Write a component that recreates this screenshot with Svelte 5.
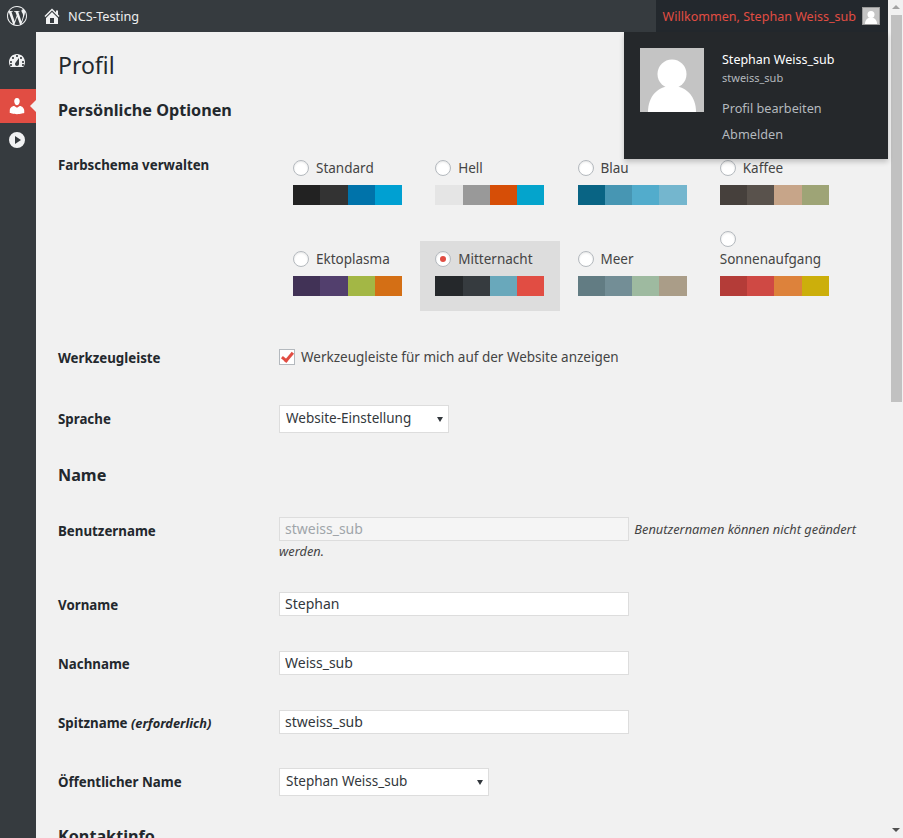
<script>
    const schemes = [
        {name: "Standard", colors: ["#222", "#333", "#0073aa", "#00a0d2"]},
        {name: "Hell", colors: ["#e5e5e5", "#999", "#d64e07", "#04a4cc"]},
        {name: "Blau", colors: ["#096484", "#4796b3", "#52accc", "#74b6ce"]},
        {name: "Kaffee", colors: ["#46403c", "#59524c", "#c7a589", "#9ea476"]},
        {name: "Ektoplasma", colors: ["#413256", "#523f6d", "#a3b745", "#d46f15"]},
        {name: "Mitternacht", colors: ["#25282b", "#363b3f", "#69a8bb", "#e14d43"], selected: true},
        {name: "Meer", colors: ["#627c83", "#738e96", "#9ebaa0", "#aa9d88"]},
        {name: "Sonnenaufgang", colors: ["#b43c38", "#cf4944", "#dd823b", "#ccaf0b"]}
    ];
</script>

<div class="page">
    <div class="window">
        <header class="adminbar">
            <div class="bar-left">
                <span class="wp-logo">
                    <svg viewBox="0 0 24 24" width="20" height="20"><path d="M21.469 6.825c.84 1.537 1.318 3.3 1.318 5.175 0 3.979-2.156 7.456-5.363 9.325l3.295-9.527c.615-1.54.82-2.771.82-3.864 0-.405-.026-.78-.07-1.11m-7.981.105c.647-.03 1.232-.105 1.232-.105.582-.075.514-.93-.067-.899 0 0-1.755.135-2.88.135-1.064 0-2.85-.15-2.85-.15-.585-.03-.661.855-.075.885 0 0 .54.061 1.125.09l1.68 4.605-2.37 7.08L5.354 6.9c.649-.03 1.234-.1 1.234-.1.585-.075.516-.93-.065-.896 0 0-1.746.138-2.874.138-.2 0-.438-.008-.69-.015C4.911 3.15 8.235 1.215 12 1.215c2.809 0 5.365 1.072 7.286 2.833-.046-.003-.091-.009-.141-.009-1.06 0-1.812.923-1.812 1.914 0 .89.513 1.643 1.06 2.531.411.72.89 1.643.89 2.977 0 .915-.354 1.994-.821 3.479l-1.075 3.585-3.9-11.61.001.014zM12 22.784c-1.059 0-2.081-.153-3.048-.437l3.237-9.406 3.315 9.087c.024.053.05.101.078.149-1.12.393-2.325.609-3.582.609M1.211 12c0-1.564.336-3.05.935-4.39L7.29 21.709C3.694 19.96 1.212 16.271 1.211 12M12 0C5.385 0 0 5.385 0 12s5.385 12 12 12 12-5.385 12-12S18.615 0 12 0"/></svg>
                </span>
                <span class="site">
                    <svg viewBox="0 0 20 20" width="20" height="20"><path d="M16 8.5l1.53 1.53-1.06 1.06L10 4.62l-6.47 6.47-1.06-1.06L10 2.5l4 4v-2h2v4zm-6-2.46l6 5.99V18H4v-5.97zM12 17v-5H8v5h4z"/></svg>
                    NCS-Testing
                </span>
            </div>
            <div class="account">
                <span>Willkommen, Stephan Weiss_sub</span>
                <span class="mini-avatar">
                    <svg viewBox="0 0 64 64" width="16" height="16"><rect width="64" height="64" fill="#c4c4c4"/><circle cx="32" cy="26" r="14" fill="#fff"/><path d="M8 64c0-16 10-26 24-26s24 10 24 26z" fill="#fff"/></svg>
                </span>
            </div>
            <div class="dropdown">
                <svg class="avatar" viewBox="0 0 64 64" width="64" height="64"><rect width="64" height="64" fill="#c4c4c4"/><circle cx="32" cy="26" r="14.5" fill="#fff"/><path d="M8 64c0-16 10-26 24-26s24 10 24 26z" fill="#fff"/></svg>
                <div class="drop-links">
                    <div class="drop-name">Stephan Weiss_sub</div>
                    <div class="drop-user">stweiss_sub</div>
                    <div class="drop-link">Profil bearbeiten</div>
                    <div class="drop-link">Abmelden</div>
                </div>
            </div>
        </header>

        <div class="body">
            <nav class="sidebar">
                <div class="menu-item">
                    <svg viewBox="0 0 20 20" width="20" height="20"><path d="M3.76 16h12.48c1.1-1.37 1.76-3.11 1.76-5 0-4.42-3.58-8-8-8s-8 3.58-8 8c0 1.89.66 3.63 1.76 5zM10 4c.55 0 1 .45 1 1s-.45 1-1 1-1-.45-1-1 .45-1 1-1zM6 6c.55 0 1 .45 1 1s-.45 1-1 1-1-.45-1-1 .45-1 1-1zm8 0c.55 0 1 .45 1 1s-.45 1-1 1-1-.45-1-1 .45-1 1-1zm-5.37 5.55L12 7v6c0 1.1-.9 2-2 2s-2-.9-2-2c0-.57.24-1.08.63-1.45zM4 10c.55 0 1 .45 1 1s-.45 1-1 1-1-.45-1-1 .45-1 1-1zm12 0c.55 0 1 .45 1 1s-.45 1-1 1-1-.45-1-1 .45-1 1-1zm-12 3c.55 0 1 .45 1 1s-.45 1-1 1-1-.45-1-1 .45-1 1-1zm12 0c.55 0 1 .45 1 1s-.45 1-1 1-1-.45-1-1 .45-1 1-1z" fill="#f1f2f3" fill-rule="evenodd"/></svg>
                </div>
                <div class="menu-item active">
                    <svg viewBox="0 0 20 20" width="20" height="20"><path d="M10 9.25c-2.27 0-2.73-3.44-2.73-3.44C7 4.02 7.82 2 9.97 2c2.16 0 2.98 2.02 2.71 3.81 0 0-.41 3.44-2.68 3.44zm0 2.57L12.72 10c2.39 0 4.52 2.33 4.52 4.53v2.49s-3.65 1.13-7.24 1.13c-3.65 0-7.24-1.13-7.24-1.13v-2.49c0-2.25 1.94-4.48 4.47-4.48z" fill="#fff"/></svg>
                </div>
                <div class="menu-item">
                    <svg viewBox="0 0 20 20" width="20" height="20"><path d="M10 2a8 8 0 1 0 0 16 8 8 0 0 0 0-16zM8 6l6 4-6 4z" fill="#f1f2f3" fill-rule="evenodd"/></svg>
                </div>
            </nav>

            <main class="content">
                <h1>Profil</h1>
                <h2 class="first">Persönliche Optionen</h2>

                <div class="row schemes-row">
                    <div class="label">Farbschema verwalten</div>
                    <div class="schemes">
                        {#each schemes as scheme}
                            <div class="scheme" class:selected={scheme.selected}>
                                <div class="scheme-head">
                                    <input type="radio" name="scheme" checked={scheme.selected} />
                                    <span>{scheme.name}</span>
                                </div>
                                <div class="swatches">
                                    {#each scheme.colors as color}
                                        <span style="background: {color}"></span>
                                    {/each}
                                </div>
                            </div>
                        {/each}
                    </div>
                </div>

                <div class="row toolbar-row">
                    <div class="label">Werkzeugleiste</div>
                    <label class="check">
                        <input type="checkbox" checked />
                        Werkzeugleiste für mich auf der Website anzeigen
                    </label>
                </div>

                <div class="row language-row">
                    <div class="label">Sprache</div>
                    <div class="select language"><select><option>Website-Einstellung</option></select></div>
                </div>

                <h2 class="name-head">Name</h2>

                <div class="row user-row">
                    <div class="label">Benutzername</div>
                    <div class="user-field">
                        <input class="text" type="text" value="stweiss_sub" disabled />
                        <em>Benutzernamen können nicht geändert werden.</em>
                    </div>
                </div>

                <div class="row field-row first-name">
                    <div class="label">Vorname</div>
                    <input class="text" type="text" value="Stephan" />
                </div>
                <div class="row field-row">
                    <div class="label">Nachname</div>
                    <input class="text" type="text" value="Weiss_sub" />
                </div>
                <div class="row field-row">
                    <div class="label">Spitzname <em>(erforderlich)</em></div>
                    <input class="text" type="text" value="stweiss_sub" />
                </div>
                <div class="row display-row">
                    <div class="label">Öffentlicher Name</div>
                    <div class="select display"><select><option>Stephan Weiss_sub</option></select></div>
                </div>

                <h2 class="contact-head">Kontaktinfo</h2>
            </main>
        </div>
    </div>

    <div class="scrollbar">
        <span class="arrow up"></span>
        <span class="thumb"></span>
        <span class="arrow down"></span>
    </div>
</div>

<style>
    :global(body) {
        background: #f1f1f1;
        font-family: "Noto Sans", "Open Sans", sans-serif;
        font-size: 13.5px;
        color: #444;
        overflow: hidden;
    }

    .page {
        display: flex;
        height: 838px;
        overflow: hidden;
    }

    .window {
        flex: 1;
        min-width: 0;
        display: flex;
        flex-direction: column;
    }

    .adminbar {
        position: relative;
        flex: none;
        height: 32px;
        display: flex;
        justify-content: space-between;
        background: #23282d;
        color: #eee;
        font-size: 12.7px;
    }

    .bar-left {
        flex: 1;
        display: flex;
        align-items: center;
        background: #363b3f;
    }

    .bar-left svg {
        fill: #f1f2f3;
        display: block;
    }

    .wp-logo {
        width: 34px;
        display: flex;
        justify-content: center;
    }

    .site {
        margin-left: 8px;
        display: flex;
        align-items: center;
        gap: 6px;
    }

    .account {
        width: 232px;
        box-sizing: border-box;
        display: flex;
        align-items: center;
        justify-content: flex-end;
        gap: 6px;
        padding-right: 8px;
        color: #e14d43;
        font-size: 12.55px;
        white-space: nowrap;
    }

    .mini-avatar {
        border: 1px solid #999;
        display: block;
        height: 16px;
    }

    .dropdown {
        position: absolute;
        top: 32px;
        right: 0;
        width: 264px;
        height: 127px;
        box-sizing: border-box;
        padding: 16px;
        display: flex;
        gap: 18px;
        background: #25282b;
        box-shadow: 0 3px 5px rgba(0, 0, 0, 0.2);
        z-index: 2;
    }

    .avatar {
        flex: none;
    }

    .drop-links {
        font-size: 12.7px;
        color: #b4b9be;
        margin-top: -1px;
    }

    .drop-name {
        color: #fff;
        font-size: 12.5px;
        line-height: 26px;
    }

    .drop-user {
        font-size: 11px;
        line-height: 10px;
        margin-bottom: 12px;
    }

    .drop-link {
        line-height: 26px;
    }

    .body {
        flex: 1;
        display: flex;
        min-height: 0;
    }

    .sidebar {
        flex: none;
        width: 36px;
        padding-top: 12px;
        background: #363b3f;
    }

    .menu-item {
        position: relative;
        height: 34px;
        display: flex;
        align-items: center;
        justify-content: center;
        padding-right: 2px;
    }

    .menu-item.active {
        background: #e14d43;
        margin-top: 11px;
    }

    .menu-item.active::after {
        content: "";
        position: absolute;
        right: 0;
        top: 11px;
        border: 6px solid transparent;
        border-left-width: 0;
        border-right-color: #f1f1f1;
    }

    .content {
        flex: 1;
        min-width: 0;
        padding-left: 22px;
        padding-right: 30px;
    }

    h1 {
        margin: 19px 0 0;
        font-size: 23px;
        font-weight: 400;
        line-height: 29px;
        color: #23282d;
    }

    h2 {
        margin: 0;
        font-size: 16.2px;
        font-weight: 700;
        line-height: 22px;
        color: #23282d;
    }

    h2.first {
        margin-top: 19px;
    }

    h2.name-head {
        margin-top: 31px;
    }

    h2.contact-head {
        margin-top: 29px;
    }

    .row {
        display: grid;
        grid-template-columns: 221px 1fr;
    }

    .label {
        font-size: 13.3px;
        font-weight: 700;
        color: #23282d;
        line-height: 20px;
    }

    .label em {
        font-size: 12.8px;
    }

    .schemes-row {
        margin-top: 34px;
    }

    .schemes {
        display: grid;
        grid-template-columns: repeat(4, 142.25px);
        grid-auto-rows: 70px;
        row-gap: 21px;
        margin: -5px 0 0 -1px;
    }

    .scheme {
        width: 140px;
        height: 70px;
        box-sizing: border-box;
        padding: 0 15px 15px;
        display: flex;
        flex-direction: column;
        justify-content: flex-end;
    }

    .scheme.selected {
        background: #ddd;
    }

    .scheme-head {
        flex: none;
        display: flex;
        flex-wrap: wrap;
        align-items: center;
        gap: 2px 7px;
        margin-bottom: 7px;
        line-height: 20px;
    }

    .swatches {
        flex: none;
        display: flex;
        height: 20px;
        width: 109px;
    }

    .swatches span {
        flex: 1;
    }

    input[type="radio"] {
        appearance: none;
        flex: none;
        width: 16px;
        height: 16px;
        margin: 0;
        border: 1px solid #b4b9be;
        border-radius: 50%;
        background: #fff;
        box-shadow: inset 0 1px 2px rgba(0, 0, 0, 0.1);
        display: grid;
        place-items: center;
    }

    input[type="radio"]:checked::before {
        content: "";
        width: 6px;
        height: 6px;
        border-radius: 50%;
        background: #e14d43;
    }

    .toolbar-row {
        margin-top: 37px;
    }

    .check {
        display: flex;
        align-items: center;
        gap: 6px;
        line-height: 20px;
        margin-top: -3px;
    }

    input[type="checkbox"] {
        appearance: none;
        flex: none;
        width: 16px;
        height: 16px;
        margin: 0;
        border: 1px solid #b4b9be;
        background: #fff;
        position: relative;
    }

    input[type="checkbox"]:checked::before {
        content: "";
        position: absolute;
        left: 4px;
        top: 0;
        width: 4px;
        height: 9px;
        border: solid #e14d43;
        border-width: 0 3px 3px 0;
        transform: rotate(40deg);
    }

    .language-row {
        margin-top: 37px;
        align-items: center;
    }

    .select {
        position: relative;
        height: 28px;
    }

    .select::after {
        content: "";
        position: absolute;
        right: 6px;
        top: 12px;
        border: 3.5px solid transparent;
        border-top: 5px solid #32373c;
        border-bottom-width: 0;
    }

    select {
        appearance: none;
        display: block;
        width: 100%;
        height: 28px;
        box-sizing: border-box;
        border: 1px solid #ddd;
        background: #fff;
        color: #32373c;
        font: inherit;
        font-size: 13.5px;
        padding: 0 6px 2px;
        border-radius: 0;
    }

    .language {
        width: 170px;
    }

    .display {
        width: 210px;
    }

    .text {
        width: 350px;
        height: 24px;
        box-sizing: border-box;
        border: 1px solid #ddd;
        background: #fff;
        color: #32373c;
        font: inherit;
        font-size: 14px;
        padding: 0 5px 2px;
        margin: 0;
    }

    .text:disabled {
        background: #f5f5f5;
        color: #a0a5aa;
    }

    .user-row {
        margin-top: 31px;
        align-items: start;
    }

    .user-row .label {
        margin-top: 4px;
    }

    .user-field {
        line-height: 21px;
        font-size: 12.8px;
    }

    .user-field em {
        color: #444;
        margin-left: 2px;
    }

    .field-row {
        margin-top: 35px;
        align-items: center;
    }

    .field-row .label {
        margin-top: 2px;
    }

    .first-name {
        margin-top: 30px;
    }

    .display-row {
        margin-top: 34px;
        align-items: center;
    }

    .scrollbar {
        flex: none;
        width: 15px;
        height: 838px;
        position: relative;
        display: flex;
        flex-direction: column;
        align-items: center;
        background: #f1f1f1;
    }

    .thumb {
        width: 11px;
        height: 387px;
        margin-left: 1px;
        background: #c1c1c1;
    }

    .arrow {
        width: 0;
        height: 0;
        border: 4px solid transparent;
    }

    .arrow.up {
        border-top-width: 0;
        border-bottom-color: #a3a3a3;
        margin: 5px 0 6px;
    }

    .arrow.down {
        border-bottom-width: 0;
        border-top-color: #505050;
        margin-top: auto;
        margin-bottom: 6px;
    }
</style>
